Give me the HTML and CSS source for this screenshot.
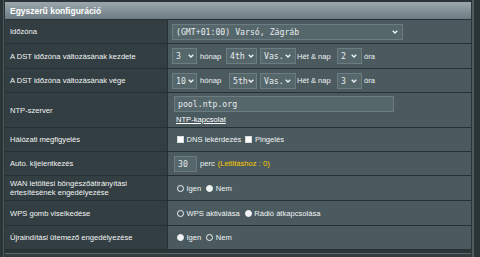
FILE: index.html
```html
<!doctype html>
<html>

<head>
  <meta charset="utf-8">
  <title>Egyszerű konfiguráció</title>
  <meta name="viewport" content="width=device-width, initial-scale=1">
  <link rel="stylesheet" href="styles.css">
</head>

<body>
  <div class="panel">
    <div class="form">
      <div class="form_head">Egyszerű konfiguráció</div>

      <div class="row">
        <div class="label">Időzóna</div>
        <div class="value">
          <div class="sel sel_tz"><span>(GMT+01:00) Varsó, Zágráb</span>
            <svg class="chev" width="6" height="4" viewBox="0 0 6 4"><polyline points="0.7,0.7 3,3 5.3,0.7" /></svg>
          </div>
        </div>
      </div>

      <div class="row row_25">
        <div class="label">A DST időzóna változásának kezdete</div>
        <div class="value">
          <div class="sel sel_m"><span>3</span>
            <svg class="chev" width="6" height="4" viewBox="0 0 6 4"><polyline points="0.7,0.7 3,3 5.3,0.7" /></svg>
          </div>
          <span class="unit unit_month">hónap</span>
          <div class="sel sel_w"><span>4th</span>
            <svg class="chev" width="6" height="4" viewBox="0 0 6 4"><polyline points="0.7,0.7 3,3 5.3,0.7" /></svg>
          </div>
          <div class="sel sel_d"><span>Vas.</span>
            <svg class="chev" width="6" height="4" viewBox="0 0 6 4"><polyline points="0.7,0.7 3,3 5.3,0.7" /></svg>
          </div>
          <span class="unit unit_day">Hét &amp; nap</span>
          <div class="sel sel_h"><span>2</span>
            <svg class="chev" width="6" height="4" viewBox="0 0 6 4"><polyline points="0.7,0.7 3,3 5.3,0.7" /></svg>
          </div>
          <span class="unit unit_hour">óra</span>
        </div>
      </div>

      <div class="row">
        <div class="label">A DST időzóna változásának vége</div>
        <div class="value">
          <div class="sel sel_m"><span>10</span>
            <svg class="chev" width="6" height="4" viewBox="0 0 6 4"><polyline points="0.7,0.7 3,3 5.3,0.7" /></svg>
          </div>
          <span class="unit unit_month">hónap</span>
          <div class="sel sel_w sel_w_short"><span>5th</span>
            <svg class="chev" width="6" height="4" viewBox="0 0 6 4"><polyline points="0.7,0.7 3,3 5.3,0.7" /></svg>
          </div>
          <div class="sel sel_d"><span>Vas.</span>
            <svg class="chev" width="6" height="4" viewBox="0 0 6 4"><polyline points="0.7,0.7 3,3 5.3,0.7" /></svg>
          </div>
          <span class="unit unit_day">Hét &amp; nap</span>
          <div class="sel sel_h"><span>3</span>
            <svg class="chev" width="6" height="4" viewBox="0 0 6 4"><polyline points="0.7,0.7 3,3 5.3,0.7" /></svg>
          </div>
          <span class="unit unit_hour">óra</span>
        </div>
      </div>

      <div class="row row_35">
        <div class="label">NTP-szerver</div>
        <div class="value value_stack">
          <div class="field field_ntp">pool.ntp.org</div>
          <a href="#" class="link">NTP-kapcsolat</a>
        </div>
      </div>

      <div class="row">
        <div class="label">Hálózati megfigyelés</div>
        <div class="value">
          <span class="check"></span><span class="opt">DNS lekérdezés</span>
          <span class="check"></span><span class="opt">Pingelés</span>
        </div>
      </div>

      <div class="row">
        <div class="label">Auto. kijelentkezés</div>
        <div class="value">
          <div class="field field_min">30</div>
          <span class="unit unit_perc">perc</span>
          <span class="hint">(Letiltáshoz : 0)</span>
        </div>
      </div>

      <div class="row row_25">
        <div class="label">WAN letöltési böngészőátirányítási<br>értesítésének engedélyezése</div>
        <div class="value">
          <span class="radio"></span><span class="opt">Igen</span>
          <span class="radio radio_on"></span><span class="opt">Nem</span>
        </div>
      </div>

      <div class="row row_25">
        <div class="label">WPS gomb viselkedése</div>
        <div class="value">
          <span class="radio"></span><span class="opt">WPS aktiválása</span>
          <span class="radio radio_on"></span><span class="opt">Rádió átkapcsolása</span>
        </div>
      </div>

      <div class="row">
        <div class="label">Újraindítási ütemező engedélyezése</div>
        <div class="value">
          <span class="radio radio_on"></span><span class="opt">Igen</span>
          <span class="radio"></span><span class="opt">Nem</span>
        </div>
      </div>
    </div>

    <div class="next"></div>
  </div>
</body>

</html>
```

FILE: styles.css
```css
* {
  margin: 0;
  box-sizing: border-box;
}

html,
body {
  height: 100%;
  overflow: hidden;
}

body {
  background: #2b3437;
  font-family: "Liberation Sans", Arial, sans-serif;
  font-size: 7.6px;
  color: #f2f4f4;
}

.panel {
  margin-left: 3px;
  width: 471px;
  height: 100%;
  padding: 2px 1px 0 1px;
  border-left: 1px solid #4f5a5e;
  border-right: 2px solid #4f5a5e;
}

.form_head {
  height: 18px;
  padding-left: 5px;
  display: flex;
  align-items: center;
  background: linear-gradient(#9aa8ad, #6d7c82);
  border-bottom: 1px solid #263034;
  color: #fff;
  font-weight: bold;
  font-size: 8.5px;
}

.row {
  display: grid;
  grid-template-columns: 163px 1fr;
  height: 24px;
  border-bottom: 1px solid #263034;
}

.row_25 {
  height: 25px;
}

.row_35 {
  height: 35px;
}

.label {
  display: flex;
  align-items: center;
  padding-left: 5px;
  background: #323e42;
  border-right: 1px solid #263034;
  line-height: 9px;
}

.value {
  display: flex;
  align-items: center;
  padding-left: 4px;
  background: #4a5a5f;
}

.value_stack {
  flex-direction: column;
  align-items: flex-start;
  justify-content: center;
}

/* select boxes */
.sel {
  display: flex;
  align-items: center;
  justify-content: space-between;
  height: 16px;
  padding: 0 4px 0 3px;
  background: #56676c;
  border: 1px solid #6c7c81;
  font-family: "DejaVu Sans Mono", "Liberation Mono", monospace;
  font-size: 8.2px;
  color: #e6ebec;
}

.chev {
  flex: none;
}

.chev polyline {
  fill: none;
  stroke: #f0f3f4;
  stroke-width: 1.3;
}

.sel_tz {
  width: 231px;
}

.sel_m {
  width: 25px;
  padding-right: 2px;
}

.sel_w {
  width: 31px;
  padding-right: 2px;
}

.sel_w_short {
  width: 28px;
  margin-left: 3px;
}

.sel_d {
  width: 36px;
  margin-left: 3px;
}

.sel_h {
  width: 25px;
}

.unit {
  flex: none;
}

.unit_month {
  width: 29px;
  padding-left: 3px;
}

.unit_day {
  width: 41px;
  padding-left: 1px;
}

.unit_hour {
  padding-left: 2px;
}

/* text inputs */
.field {
  height: 16px;
  display: flex;
  align-items: center;
  margin-left: 2px;
  padding-left: 3px;
  background: #56676c;
  border: 1px solid #6c7c81;
  font-family: "DejaVu Sans Mono", "Liberation Mono", monospace;
  font-size: 8.2px;
  color: #e6ebec;
}

.field_ntp {
  width: 220px;
}

.field_min {
  width: 23px;
}

.link {
  margin: 3px 0 0 4px;
  color: #fff;
  text-decoration: underline;
}

.unit_perc {
  padding-left: 3px;
}

.hint {
  padding-left: 3px;
  color: #ffcc00;
}

/* checkboxes and radios */
.check {
  width: 7px;
  height: 7px;
  margin-left: 4px;
  background: #fff;
  border: 1px solid #d8dcdd;
  flex: none;
}

.radio {
  width: 7px;
  height: 7px;
  margin-left: 5px;
  border-radius: 50%;
  border: 1.4px solid #f2f4f4;
  flex: none;
}

.radio_on {
  background: #f2f4f4;
}

.opt {
  padding-left: 2.5px;
}

.value .check:first-child,
.value .radio:first-child {
  margin-left: 5px;
}

.next {
  margin-top: 3px;
  height: 10px;
  background: #333e42;
  border-top: 1px solid #5b676b;
}
```
